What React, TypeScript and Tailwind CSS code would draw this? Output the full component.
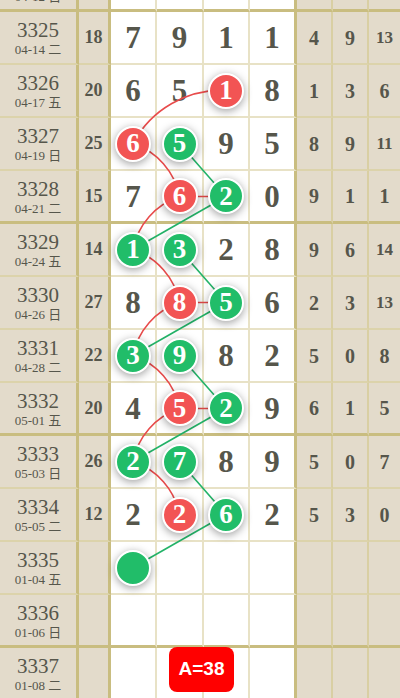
import React from 'react';

type Row = {
  no: string;
  date: string;
  sum: string;
  nums: string[];
  balls: string[]; // '' | 'r' | 'g'
  right: string[];
  thick?: boolean;
};

const rows: Row[] = [
  { no: '3324', date: '04-12 日', sum: '', nums: ['', '', '', ''], balls: ['', '', '', ''], right: ['', '', ''], thick: true },
  { no: '3325', date: '04-14 二', sum: '18', nums: ['7', '9', '1', '1'], balls: ['', '', '', ''], right: ['4', '9', '13'] },
  { no: '3326', date: '04-17 五', sum: '20', nums: ['6', '5', '1', '8'], balls: ['', '', 'r', ''], right: ['1', '3', '6'] },
  { no: '3327', date: '04-19 日', sum: '25', nums: ['6', '5', '9', '5'], balls: ['r', 'g', '', ''], right: ['8', '9', '11'] },
  { no: '3328', date: '04-21 二', sum: '15', nums: ['7', '6', '2', '0'], balls: ['', 'r', 'g', ''], right: ['9', '1', '1'], thick: true },
  { no: '3329', date: '04-24 五', sum: '14', nums: ['1', '3', '2', '8'], balls: ['g', 'g', '', ''], right: ['9', '6', '14'] },
  { no: '3330', date: '04-26 日', sum: '27', nums: ['8', '8', '5', '6'], balls: ['', 'r', 'g', ''], right: ['2', '3', '13'] },
  { no: '3331', date: '04-28 二', sum: '22', nums: ['3', '9', '8', '2'], balls: ['g', 'g', '', ''], right: ['5', '0', '8'] },
  { no: '3332', date: '05-01 五', sum: '20', nums: ['4', '5', '2', '9'], balls: ['', 'r', 'g', ''], right: ['6', '1', '5'], thick: true },
  { no: '3333', date: '05-03 日', sum: '26', nums: ['2', '7', '8', '9'], balls: ['g', 'g', '', ''], right: ['5', '0', '7'] },
  { no: '3334', date: '05-05 二', sum: '12', nums: ['2', '2', '6', '2'], balls: ['', 'r', 'g', ''], right: ['5', '3', '0'] },
  { no: '3335', date: '01-04 五', sum: '', nums: ['', '', '', ''], balls: ['g', '', '', ''], right: ['', '', ''] },
  { no: '3336', date: '01-06 日', sum: '', nums: ['', '', '', ''], balls: ['', '', '', ''], right: ['', '', ''], thick: true },
  { no: '3337', date: '01-08 二', sum: '', nums: ['', '', '', ''], balls: ['', '', '', ''], right: ['', '', ''] },
];

// ball centres, row 0 = 3325
const cx = [133, 179.5, 226, 272];
const cy = (i: number) => 37.5 + 53 * i;

const redPath: [number, number][] = [[2, 1], [0, 2], [1, 3], [0, 4], [1, 5], [0, 6], [1, 7], [0, 8], [1, 9]];
const redFlat = [3, 5, 7];
const greenSegs: [number, number, number, number][] = [
  [1, 2, 2, 3], [2, 3, 0, 4],
  [1, 4, 2, 5], [2, 5, 0, 6],
  [1, 6, 2, 7], [2, 7, 0, 8],
  [1, 8, 2, 9], [2, 9, 0, 10],
];

function Ball({ color, label }: { color: string; label: string }) {
  return (
    <div
      className={`relative z-10 w-9 h-9 rounded-full border-2 border-white flex items-center justify-center shadow-[0_2px_8px_rgba(0,0,0,0.38)] ${
        color === 'r' ? 'bg-[#f25454]' : 'bg-[#21bd69]'
      }`}
    >
      <span className="text-white text-[27px] font-bold leading-none">{label}</span>
    </div>
  );
}

export default function App() {
  return (
    <div className="relative w-[400px] h-[698px] overflow-hidden bg-white text-[#56564b] font-['Liberation_Serif','Noto_Sans_CJK_SC',serif]">
      <div className="-mt-[41px]">
        {rows.map(row => {
          const beigeB = row.thick ? 'border-b-[3px] border-b-[#c9bd80]' : 'border-b-2 border-b-[#dcd3ab]';
          const whiteB = row.thick ? 'border-b-[3px] border-b-[#c9bd80]' : 'border-b-2 border-b-[#e8e2c6]';
          return (
            <div key={row.no} className="grid grid-cols-[79px_32px_46px_47px_46px_47px_36px_36px_31px] h-[53px]">
              <div className={`bg-[#e3dbcb] border-r-[3px] border-r-[#c9bd80] ${beigeB} flex flex-col items-center justify-center pt-[2px]`}>
                <span className="text-[21px] leading-[22px]">{row.no}</span>
                <span className="text-[13px] leading-[17px]">{row.date}</span>
              </div>
              <div className={`bg-[#e3dbcb] border-r-[3px] border-r-[#c9bd80] ${beigeB} flex items-center justify-center`}>
                <span className="text-[18px] font-bold">{row.sum}</span>
              </div>
              {row.nums.map((n, i) => (
                <div
                  key={i}
                  className={`bg-white ${i === 3 ? 'border-r-[3px] border-r-[#c9bd80]' : 'border-r-2 border-r-[#e8e2c6]'} ${whiteB} flex items-center justify-center`}
                >
                  {row.balls[i] ? (
                    <Ball color={row.balls[i]} label={row.no === '3335' ? '' : n} />
                  ) : (
                    <span className="text-[31px] font-bold leading-none">{n}</span>
                  )}
                </div>
              ))}
              {row.right.map((n, i) => (
                <div
                  key={i}
                  className={`bg-[#e3dbcb] ${i < 2 ? 'border-r-2 border-r-[#d9cfa3]' : ''} ${beigeB} flex items-center justify-center`}
                >
                  <span className={`font-bold ${n.length > 1 ? 'text-[17px]' : 'text-[20px]'}`}>{n}</span>
                </div>
              ))}
            </div>
          );
        })}
      </div>

      <svg className="absolute inset-0 z-0 pointer-events-none" width="400" height="698" fill="none">
        {redPath.slice(1).map(([c, r], k) => {
          const [pc, pr] = redPath[k];
          const long = Math.abs(pc - c) > 1;
          const sweep = k % 2 === 0 ? 0 : 1;
          const R = long ? 100 : 70;
          return (
            <path
              key={k}
              d={`M ${cx[pc]} ${cy(pr)} A ${R} ${R} 0 0 ${sweep} ${cx[c]} ${cy(r)}`}
              stroke="#e84b4b"
              strokeWidth="1.6"
            />
          );
        })}
        {redFlat.map(r => (
          <line key={r} x1={cx[1]} y1={cy(r)} x2={cx[2]} y2={cy(r)} stroke="#e84b4b" strokeWidth="1.6" />
        ))}
        {greenSegs.map(([c1, r1, c2, r2], k) => (
          <line key={k} x1={cx[c1]} y1={cy(r1)} x2={cx[c2]} y2={cy(r2)} stroke="#23b368" strokeWidth="1.6" />
        ))}
      </svg>

      <div className="absolute left-[169px] top-[647px] w-[65px] h-[45px] rounded-[8px] bg-[#ff0000] flex items-center justify-center z-10">
        <span className="text-white text-[19px] font-bold font-['Liberation_Sans',sans-serif]">A=38</span>
      </div>
    </div>
  );
}
